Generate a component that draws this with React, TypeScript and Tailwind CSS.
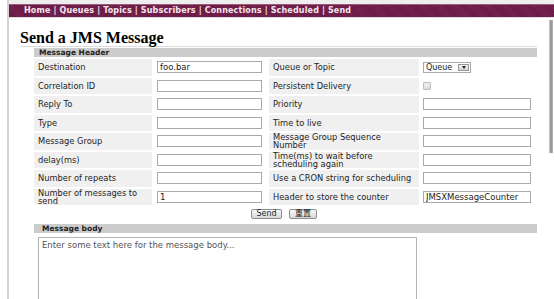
const TextBox = ({ value = "", w = "w-[105px]" }: { value?: string; w?: string }) => (
  <input
    readOnly
    value={value}
    className={`${w} h-[12px] border border-[#a9a9a9] bg-white px-[2px] text-[8.5px] leading-none text-[#222] outline-none`}
  />
);

const QueueSelect = () => (
  <div className="flex h-[11px] w-[48px] items-stretch border border-[#a9a9a9] bg-white">
    <span className="flex-1 pl-[2px] text-[8px] leading-[9px] text-[#222]">Queue</span>
    <span className="m-[1px] flex w-[11px] items-center justify-center border border-[#999] bg-linear-to-b from-[#f4f4f4] to-[#d4d4d4]">
      <span className="h-0 w-0 border-x-[2.5px] border-t-[3px] border-x-transparent border-t-[#222]" />
    </span>
  </div>
);

const Checkbox = () => (
  <span className="block h-[8px] w-[8px] rounded-[1px] border border-[#bdbdbd] bg-linear-to-b from-[#f2f2f2] to-[#dcdcdc]" />
);

const fields: { l1: string; v1?: string; l2: string; c2: React.ReactNode }[] = [
  { l1: "Destination", v1: "foo.bar", l2: "Queue or Topic", c2: <QueueSelect /> },
  { l1: "Correlation ID", l2: "Persistent Delivery", c2: <Checkbox /> },
  { l1: "Reply To", l2: "Priority", c2: <TextBox w="w-[108px]" /> },
  { l1: "Type", l2: "Time to live", c2: <TextBox w="w-[108px]" /> },
  { l1: "Message Group", l2: "Message Group Sequence Number", c2: <TextBox w="w-[108px]" /> },
  { l1: "delay(ms)", l2: "Time(ms) to wait before scheduling again", c2: <TextBox w="w-[108px]" /> },
  { l1: "Number of repeats", l2: "Use a CRON string for scheduling", c2: <TextBox w="w-[108px]" /> },
  {
    l1: "Number of messages to send",
    v1: "1",
    l2: "Header to store the counter",
    c2: <TextBox w="w-[108px]" value="JMSXMessageCounter" />,
  },
];

const Label = ({ text }: { text: string }) => (
  <div className="flex items-center bg-[#f0f0f0] pl-[4px] pr-[4px] text-[8.3px] leading-[8px] text-[#1e1e1e]">
    {text}
  </div>
);

const Btn = ({ children, w }: { children: React.ReactNode; w: string }) => (
  <button
    className={`${w} h-[10px] rounded-[2px] border border-[#8c8c8c] bg-linear-to-b from-[#fbfbfb] to-[#d6d6d6] text-[8px] leading-[8px] text-[#222]`}
  >
    {children}
  </button>
);

export default function App() {
  return (
    <div className="flex h-[299px] w-[554px] overflow-hidden bg-white font-['DejaVu_Sans','Noto_Sans_CJK_SC',sans-serif]">
      <div className="w-[7px] shrink-0" />
      <div className="w-[2px] shrink-0 bg-[#d2d2d2]" />

      <div className="flex min-h-0 flex-1 flex-col">
        <div className="h-[4px] shrink-0 bg-[#eeeeee]" />
        <nav className="flex h-[13px] shrink-0 items-center border-t border-[#9a5a7c] bg-[repeating-linear-gradient(45deg,#6b1944_0px,#6b1944_1px,#752450_1px,#752450_2px)] pl-[15px] text-[8px] font-bold tracking-[0.15px] text-[#f3e6ee]">
          Home | Queues | Topics | Subscribers | Connections | Scheduled | Send
        </nav>
        <div className="h-px shrink-0 bg-[#dddddd]" />

        <div className="flex min-h-0 flex-1">
          <main className="flex-1 pl-[11px] pr-[12px] pt-[12px]">
            <h1 className="font-['Liberation_Serif',serif] text-[16px] font-bold leading-[16px] text-black">
              Send a JMS Message
            </h1>
            <div className="h-px bg-[#dcdcdc]" />

            <div className="ml-[14px] w-[503px]">
              <div className="mt-[1px] h-[9px] bg-[#cccccc] pl-[5px] text-[7.5px] font-bold leading-[9px] text-[#222]">
                Message Header
              </div>

              <div className="mt-[2px] grid w-[502px] grid-cols-[118px_113px_150px_115px] auto-rows-[16.5px] gap-[2px]">
                {fields.map((f) => (
                  <div key={f.l1} className="contents">
                    <Label text={f.l1} />
                    <div className="flex items-center bg-white pl-[3px]">
                      <TextBox value={f.v1} />
                    </div>
                    <Label text={f.l2} />
                    <div className="flex items-center bg-white pl-[2px]">{f.c2}</div>
                  </div>
                ))}
              </div>

              <div className="mt-[4px] flex justify-center gap-[7px] pr-[3px]">
                <Btn w="w-[31px]">Send</Btn>
                <Btn w="w-[28px]">重置</Btn>
              </div>

              <div className="mt-[5px] h-[9px] bg-[#cccccc] pl-[8px] text-[7.5px] font-bold leading-[9px] text-[#222]">
                Message body
              </div>

              <textarea
                readOnly
                placeholder="Enter some text here for the message body..."
                className="ml-[4px] mt-[4px] block h-[80px] w-[379px] resize-none border border-[#b5b5b5] bg-white px-[3px] py-[2px] text-[8.5px] leading-[10px] text-[#444] outline-none placeholder:text-[#555]"
              />
            </div>
          </main>

          <div className="mr-[1px] mt-[2px] h-[133px] w-[4px] shrink-0 bg-linear-to-r from-[#d4d4d4] via-[#8c8c8c] to-[#bdbdbd]" />
        </div>
      </div>
    </div>
  );
}
